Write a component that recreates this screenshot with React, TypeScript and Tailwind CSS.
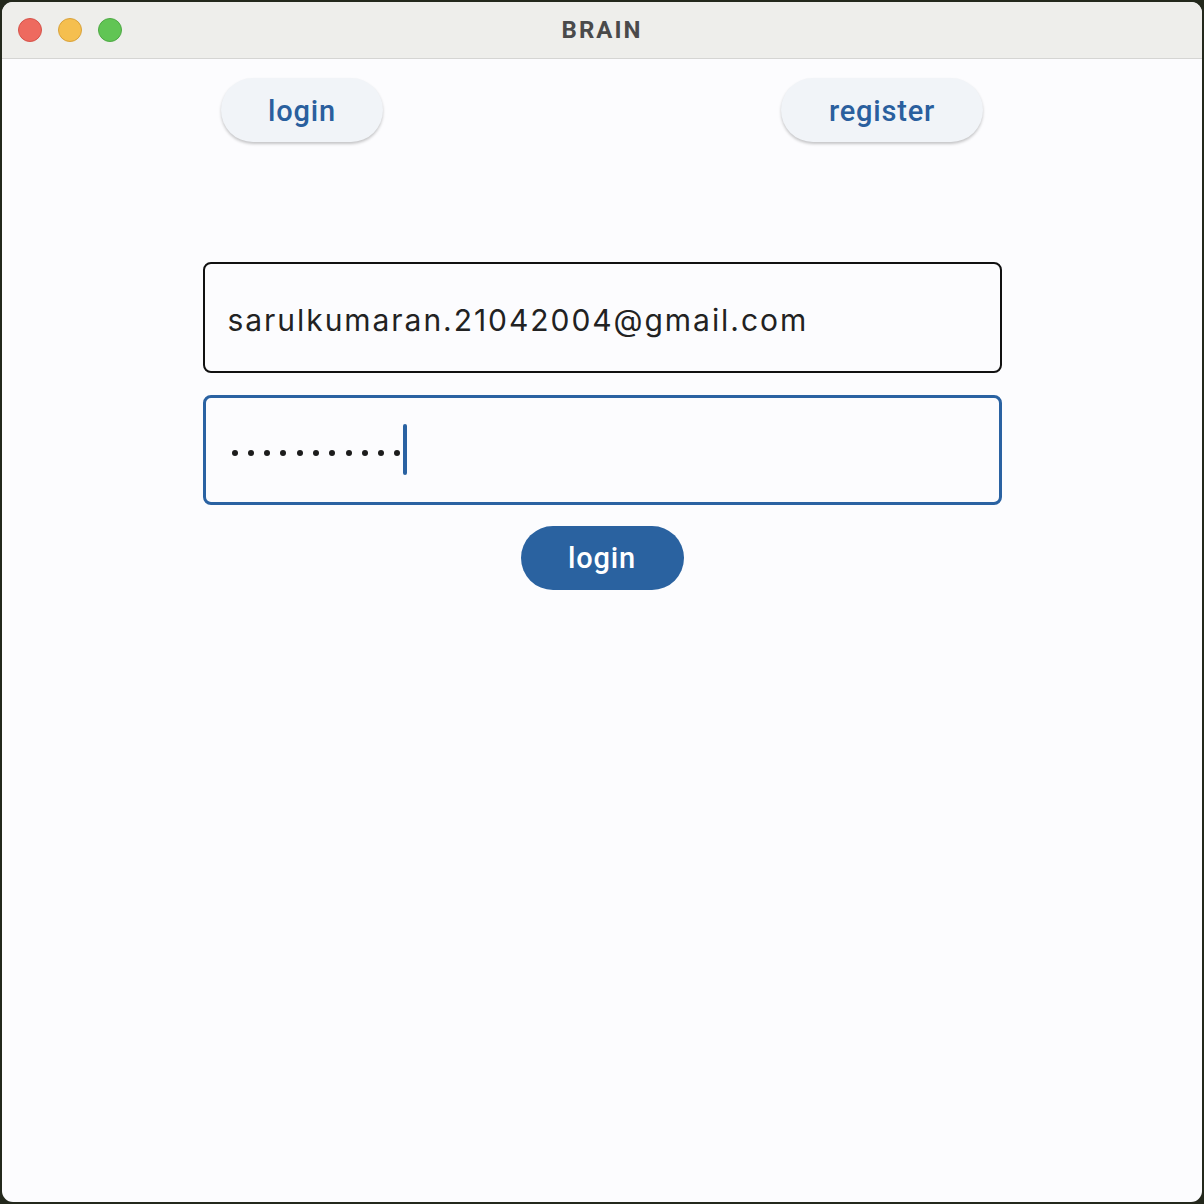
import React from 'react';

const font = { fontFamily: 'Inter, "Noto Sans", sans-serif' };
const boldFont = { fontFamily: 'Roboto, "Open Sans", sans-serif' };

const TrafficLights: React.FC = () => (
  <div className="flex items-center gap-[16px] pl-[16px]">
    <div className="w-[24px] h-[24px] rounded-full bg-[#ee6a5f] border border-[#d6534a]" />
    <div className="w-[24px] h-[24px] rounded-full bg-[#f5bf4f] border border-[#d9a23b]" />
    <div className="w-[24px] h-[24px] rounded-full bg-[#61c554] border border-[#4ea944]" />
  </div>
);

const PillButton: React.FC<{ label: string; width: string }> = ({ label, width }) => (
  <button
    style={boldFont}
    className={`${width} h-[64px] pt-[3px] rounded-full bg-[#f1f4f8] text-[#2a5f9e] text-[29px] font-medium tracking-[0.8px] shadow-[0_2px_3px_rgba(0,0,0,0.22)]`}
  >
    {label}
  </button>
);

export default function App() {
  return (
    <div className="w-[1204px] h-[1204px] bg-[#23281c] p-[2px]" style={font}>
      <div className="w-full h-full rounded-[11px] overflow-hidden bg-[#fcfcfe] flex flex-col">
        {/* title bar */}
        <div className="relative h-[57px] bg-[#eeeeeb] border-b border-[#d5d5d3] flex items-center">
          <TrafficLights />
          <div
            style={boldFont}
            className="absolute inset-0 flex items-center justify-center text-[24px] font-bold text-[#4a4a4a] tracking-[2px]"
          >
            BRAIN
          </div>
        </div>

        <div className="flex flex-col items-center">
          <div className="w-[800px] flex justify-between px-[19px] pt-[19px]">
            <PillButton label="login" width="w-[162px]" />
            <PillButton label="register" width="w-[202px]" />
          </div>

          <div className="w-[800px] mt-[120px] flex flex-col items-center">
            <div className="w-[799px] h-[111px] border-2 border-[#111] rounded-[8px] flex items-center pl-[23px] pt-[6px]">
              <span className="text-[30px] text-[#222] tracking-[1.95px]">sarulkumaran.21042004@gmail.com</span>
            </div>

            <div className="w-[799px] h-[110px] mt-[22px] border-[3px] border-[#2a62a2] rounded-[8px] flex items-center pl-[26px]">
              <div className="flex items-center gap-[10.3px] mt-[6px]">
                {Array.from({ length: 11 }).map((_, i) => (
                  <span key={i} className="w-[6px] h-[6px] rounded-full bg-[#1c1c1c]" />
                ))}
              </div>
              <span className="ml-[3px] mt-[-2px] w-[3.5px] h-[51px] rounded-full bg-[#2a62a2]" />
            </div>

            <button
              style={boldFont}
              className="mt-[21px] w-[163px] h-[64px] pt-[2px] rounded-full bg-[#2a62a0] text-white text-[29px] font-medium tracking-[0.8px]"
            >
              login
            </button>
          </div>
        </div>
      </div>
    </div>
  );
}
